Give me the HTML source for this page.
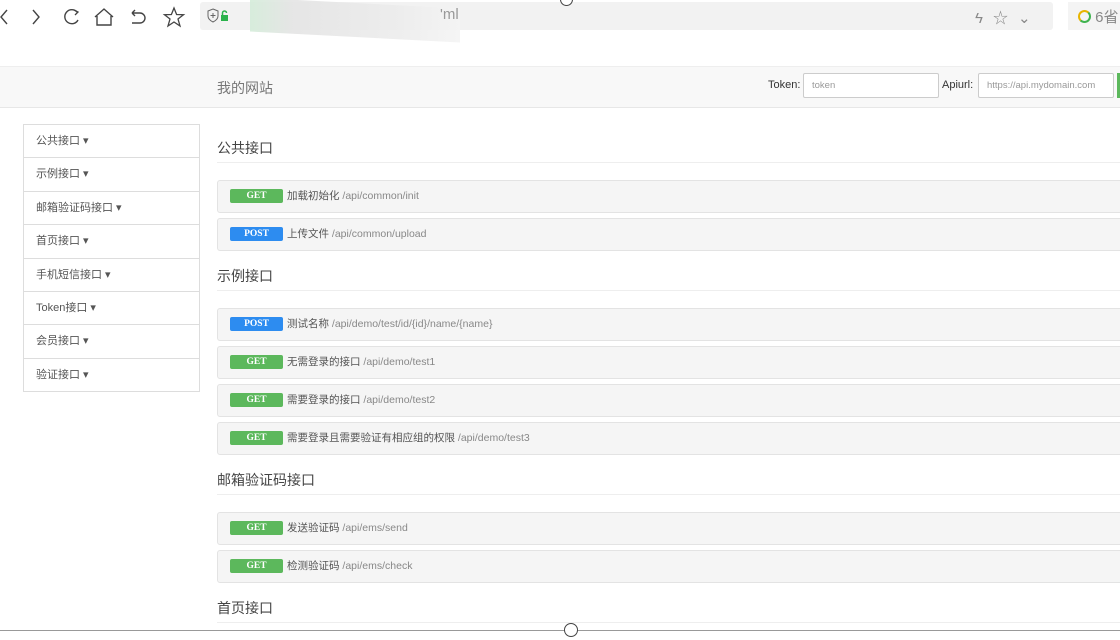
<!DOCTYPE html>
<html><head><meta charset="utf-8"><style>
*{margin:0;padding:0;box-sizing:border-box}
body{width:1120px;height:640px;overflow:hidden;background:#fff;font-family:"Liberation Sans","Noto Sans CJK SC",sans-serif;position:relative;color:#333}
.a{position:absolute}
.side{left:23px;top:124px;width:177px;border:1px solid #ddd;border-bottom:none}
.side div{height:33.4px;border-bottom:1px solid #ddd;font-size:11px;color:#555;line-height:33px;padding-left:12px}
.h{left:217px;width:903px;font-size:14px;color:#444;border-bottom:1px solid #eee;height:30px;line-height:30px}
.row{left:217px;width:910px;height:33px;background:#f5f5f5;border:1px solid #e3e3e3;border-radius:3px;font-size:10.5px;color:#555;line-height:31px;padding-left:12px}
.b{display:inline-block;width:53px;height:14px;line-height:15px;text-align:center;color:#fff;font-weight:bold;font-size:9.5px;border-radius:2px;margin-right:4px;vertical-align:middle;position:relative;top:0px;font-family:"Liberation Serif",serif}
.g{background:#5cb85c}.p{background:#2d8cf0}
.u{color:#888}
</style></head><body>
<svg class="a" style="left:0;top:6px" width="190" height="22" viewBox="0 0 190 22">
<path d="M7 4L1 11L7 18" stroke="#444" fill="none" stroke-width="1.4"/>
<path d="M33 4L39 11L33 18" stroke="#444" fill="none" stroke-width="1.4"/>
<path d="M77 6A7 7 0 1 0 78 14" stroke="#444" fill="none" stroke-width="1.4"/><path d="M74 4L78 6L75 9" stroke="#444" fill="none" stroke-width="1.3"/>
<path d="M95 11L104 3L113 11M97 10V19H111V10" stroke="#444" fill="none" stroke-width="1.4"/>
<path d="M132 7H140A5 5 0 0 1 140 17H132M132 7L135 4M132 7L135 10" stroke="#444" fill="none" stroke-width="1.4"/>
<path d="M174 2L176.6 8.5L183.5 8.7L178 13L180 20L174 16L168 20L170 13L164.5 8.7L171.4 8.5Z" stroke="#444" fill="none" stroke-width="1.3"/>
</svg>
<div class="a" style="left:200px;top:2px;width:853px;height:28px;background:#f2f2f2;border-radius:3px"></div>
<div class="a" style="left:250px;top:3px;width:210px;height:34px;background:linear-gradient(90deg,#d4ecd9,#e4e4e4 20%,#ececec 70%,#f4f4f4);transform:skewY(3deg);opacity:.9"></div>
<svg class="a" style="left:207px;top:8px" width="34" height="16"><path d="M6 1L11 3V8C11 11 8 13 6 14C4 13 1 11 1 8V3Z" stroke="#666" fill="none"/><path d="M6 5V10M3.5 7.5H8.5" stroke="#666"/><rect x="14" y="7" width="7" height="6" fill="#2bb24c"/><path d="M15.5 7V5A2 2 0 0 1 19.5 5" stroke="#2bb24c" fill="none" stroke-width="1.5"/></svg>
<div class="a" style="left:440px;top:6px;font-size:15px;color:#999">'ml</div>
<div class="a" style="left:975px;top:7px;font-size:15px;color:#888;letter-spacing:10px">ϟ☆⌄</div>
<div class="a" style="left:1068px;top:2px;width:60px;height:28px;background:#f4f4f4"></div>
<div class="a" style="left:1078px;top:6px;font-size:15px;color:#888"><span style="display:inline-block;width:13px;height:13px;border:2.5px solid #e8b500;border-color:#e8b500 #3fb34f #3fb34f #e8b500;border-radius:50%;vertical-align:-1px"></span> 6省</div>
<div class="a" style="left:560px;top:-7px;width:13px;height:13px;border:1px solid #444;border-radius:50%;background:#fff"></div>

<div class="a" style="left:0;top:66px;width:1120px;height:42px;background:#f8f8f8;border-top:1px solid #eee;border-bottom:1px solid #e7e7e7"></div>
<div class="a" style="left:217px;top:78px;font-size:14px;color:#777">我的网站</div>
<div class="a" style="left:768px;top:79px;font-size:11px;color:#333">Token:</div>
<div class="a" style="left:803px;top:73px;width:136px;height:25px;background:#fff;border:1px solid #ccc;border-radius:2px;font-size:9.5px;color:#999;padding:6px 8px">token</div>
<div class="a" style="left:942px;top:79px;font-size:11px;color:#333">Apiurl:</div>
<div class="a" style="left:978px;top:73px;width:136px;height:25px;background:#fff;border:1px solid #ccc;border-radius:2px;font-size:9.5px;color:#999;padding:6px 8px">https://api.mydomain.com</div>
<div class="a" style="left:1117px;top:73px;width:5px;height:25px;background:#5cb85c"></div>

<div class="a side"><div>公共接口 ▾</div><div>示例接口 ▾</div><div>邮箱验证码接口 ▾</div><div>首页接口 ▾</div><div>手机短信接口 ▾</div><div>Token接口 ▾</div><div>会员接口 ▾</div><div>验证接口 ▾</div></div>

<div class="a h" style="top:133px">公共接口</div>
<div class="a row" style="top:180px"><span class="b g">GET</span>加载初始化 <span class="u">/api/common/init</span></div>
<div class="a row" style="top:218px"><span class="b p">POST</span>上传文件 <span class="u">/api/common/upload</span></div>
<div class="a h" style="top:261px">示例接口</div>
<div class="a row" style="top:308px"><span class="b p">POST</span>测试名称 <span class="u">/api/demo/test/id/{id}/name/{name}</span></div>
<div class="a row" style="top:346px"><span class="b g">GET</span>无需登录的接口 <span class="u">/api/demo/test1</span></div>
<div class="a row" style="top:384px"><span class="b g">GET</span>需要登录的接口 <span class="u">/api/demo/test2</span></div>
<div class="a row" style="top:422px"><span class="b g">GET</span>需要登录且需要验证有相应组的权限 <span class="u">/api/demo/test3</span></div>
<div class="a h" style="top:465px">邮箱验证码接口</div>
<div class="a row" style="top:512px"><span class="b g">GET</span>发送验证码 <span class="u">/api/ems/send</span></div>
<div class="a row" style="top:550px"><span class="b g">GET</span>检测验证码 <span class="u">/api/ems/check</span></div>
<div class="a h" style="top:593px">首页接口</div>

<div class="a" style="left:0;top:630px;width:1120px;height:1px;background:#999"></div>
<div class="a" style="left:564px;top:623px;width:14px;height:14px;border:1px solid #444;border-radius:50%;background:#fff"></div>
</body></html>
